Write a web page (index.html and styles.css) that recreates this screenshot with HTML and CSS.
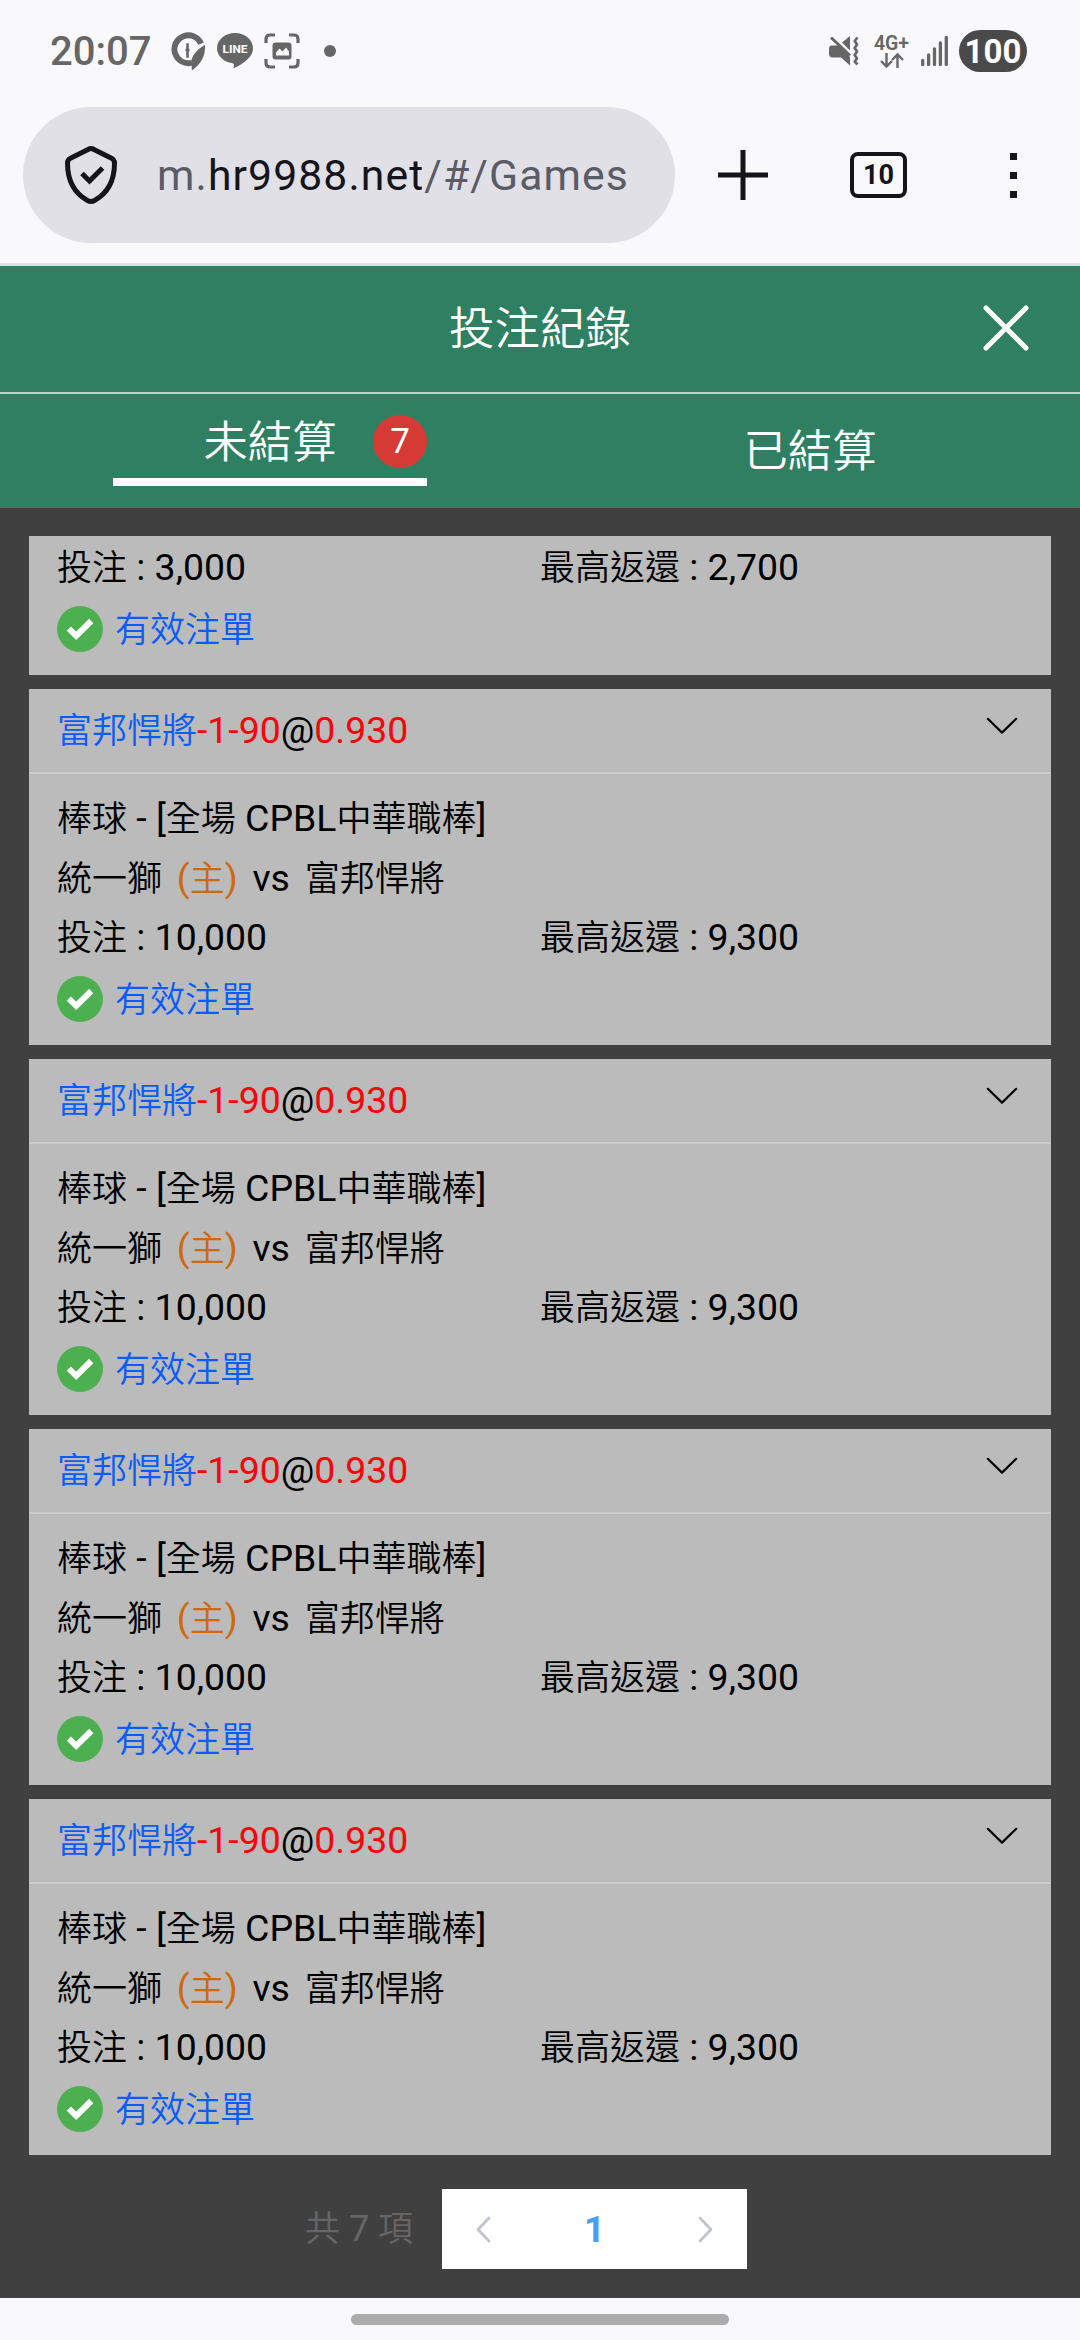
FILE: index.html
```html
<!DOCTYPE html>
<html lang="zh-Hant">
<head>
<meta charset="utf-8">
<title>投注紀錄</title>
<link rel="stylesheet" href="styles.css">
</head>
<body>
<svg class="defs" aria-hidden="true">
  <symbol id="check" viewBox="0 0 46 46">
    <circle cx="23" cy="23" r="23" fill="#4db050"/>
    <path d="M11.8 22.6 19.2 29.8 34.2 15" fill="none" stroke="#fff" stroke-width="6"/>
  </symbol>
  <symbol id="chevron" viewBox="0 0 32 18">
    <path d="M1.8 1.8 16 15.6 30.2 1.8" fill="none" stroke="#000" stroke-width="2.2" stroke-linecap="round" stroke-linejoin="round"/>
  </symbol>
</svg>

<header class="system">
  <div class="status">
    <div class="status-left">
      <span class="clock">20:07</span>
      <svg class="i-app" viewBox="0 0 36 40"><path d="M31.500 12A14.300 14.300 0 1 0 22 31.500" fill="none" stroke="#666" stroke-width="6"/><path d="M35.500 13C36 24 32 32 22 39.500L21.500 29C23 22 29 17 35.500 13Z" fill="#666"/><path d="M17.500 11.500v15M15.500 18.500h4" stroke="#666" stroke-width="2.600"/></svg>
      <svg class="i-line" viewBox="0 0 36 36"><path d="M18 0C8 0 0 6.700 0 15.300c0 7.500 6.500 13.800 15.500 15 1.300.3 1.700 1 1.400 2.300l-.5 3C24 32 36 25 36 15.300 36 6.700 28 0 18 0Z" fill="#666"/><text x="18" y="20.400" text-anchor="middle" textLength="25" lengthAdjust="spacingAndGlyphs" class="line-word">LINE</text></svg>
      <svg class="i-shot" viewBox="0 0 36 36"><path d="M2 10V6q0-4 4-4h5M25 2h5q4 0 4 4v4M34 26v4q0 4-4 4h-5M11 34H6q-4 0-4-4v-4" fill="none" stroke="#666" stroke-width="3.200"/><rect x="8.500" y="9.500" width="19" height="17" rx="3" fill="#666"/><path d="M12 22.500v-3l3.500-4 3 3 3.500-4 3 4v4Z" fill="#f9f9fb"/></svg>
      <i class="more-dot"></i>
    </div>
    <div class="status-right">
      <svg class="i-mute" viewBox="0 0 30 30"><path d="M2.500 9.500H9L21 21v8.500l-9-8H3.500q-3.500 0-3.500-4V13q0-3.500 2.500-3.500ZM21 0v14.500L13 6.500Z" fill="#666"/><path d="M2 1.500 21 19.500" stroke="#666" stroke-width="3"/><path d="M28.500 1.500 25.700 5 28 8.500 25.700 12 28 15.500 25.700 19 28 22.500 25.700 25.500 28.500 28.500" fill="none" stroke="#666" stroke-width="2.700" stroke-linejoin="round"/></svg>
      <div class="net"><span>4G+</span><svg viewBox="0 0 24 15"><path d="M6.500 0v13M1 8l5.500 5.500L12 8M17.500 15V2M12 7l5.500-5.500L23 7" fill="none" stroke="#666" stroke-width="2.400"/></svg></div>
      <svg class="i-signal" viewBox="0 0 27 30"><path d="M1.700 24.500v4M7.600 19v9.500M13.500 13v15.500M19.400 7v21.500M25.300 1.500v27" stroke="#666" stroke-width="3.300" stroke-linecap="round"/></svg>
      <span class="battery">100</span>
    </div>
  </div>
  <div class="toolbar">
    <div class="address">
      <svg class="i-shield" viewBox="0 0 52 58"><path d="M26 2.600Q27.500 2.600 29 3.500L46 12Q49.500 13.500 49.500 17C49.500 35 43 47 29.500 54.500Q26 56.300 22.500 54.500C9 47 2.500 35 2.500 17Q2.500 13.500 6 12L23 3.500Q24.500 2.600 26 2.600Z" fill="none" stroke="#15141a" stroke-width="5"/><path d="M17 27.500l7.500 7.500L37.500 22" fill="none" stroke="#15141a" stroke-width="5"/></svg>
      <span class="url">m.<b>hr9988.net</b>/#/Games</span>
    </div>
    <svg class="i-plus" viewBox="0 0 50 50"><path d="M25 0v50M0 25h50" stroke="#15141a" stroke-width="5"/></svg>
    <span class="tabcount">10</span>
    <span class="kebab"><i></i><i></i><i></i></span>
  </div>
</header>

<div class="titlebar">
  <h1>投注紀錄</h1>
  <svg class="i-close" viewBox="0 0 46 46"><path d="M3 3 43 43M43 3 3 43" stroke="#fff" stroke-width="5" stroke-linecap="round"/></svg>
</div>
<nav class="tabs">
  <div class="tab"><div class="tab-active"><span>未結算</span><span class="badge">7</span></div></div>
  <div class="tab">已結算</div>
</nav>

<main class="list">
  <article class="card card-cut">
    <div class="row amounts"><div>投注<span class="lat"> : 3,000</span></div><div>最高返還<span class="lat"> : 2,700</span></div></div>
    <div class="state"><svg><use href="#check"/></svg><span>有效注單</span></div>
  </article>
  <article class="card">
    <div class="card-head"><div class="pick">富邦悍將<span class="lat"><em>-1-90</em>@<em>0.930</em></span></div><svg class="i-chev"><use href="#chevron"/></svg></div>
    <div class="card-body">
      <div class="row">棒球<span class="lat"> - [</span>全場<span class="lat"> CPBL</span>中華職棒<span class="lat">]</span></div>
      <div class="row teams"><span>統一獅</span><span class="home"><span class="lat">(</span>主<span class="lat">)</span></span><span class="lat">vs</span><span>富邦悍將</span></div>
      <div class="row amounts"><div>投注<span class="lat"> : 10,000</span></div><div>最高返還<span class="lat"> : 9,300</span></div></div>
      <div class="state"><svg><use href="#check"/></svg><span>有效注單</span></div>
    </div>
  </article>
  <article class="card">
    <div class="card-head"><div class="pick">富邦悍將<span class="lat"><em>-1-90</em>@<em>0.930</em></span></div><svg class="i-chev"><use href="#chevron"/></svg></div>
    <div class="card-body">
      <div class="row">棒球<span class="lat"> - [</span>全場<span class="lat"> CPBL</span>中華職棒<span class="lat">]</span></div>
      <div class="row teams"><span>統一獅</span><span class="home"><span class="lat">(</span>主<span class="lat">)</span></span><span class="lat">vs</span><span>富邦悍將</span></div>
      <div class="row amounts"><div>投注<span class="lat"> : 10,000</span></div><div>最高返還<span class="lat"> : 9,300</span></div></div>
      <div class="state"><svg><use href="#check"/></svg><span>有效注單</span></div>
    </div>
  </article>
  <article class="card">
    <div class="card-head"><div class="pick">富邦悍將<span class="lat"><em>-1-90</em>@<em>0.930</em></span></div><svg class="i-chev"><use href="#chevron"/></svg></div>
    <div class="card-body">
      <div class="row">棒球<span class="lat"> - [</span>全場<span class="lat"> CPBL</span>中華職棒<span class="lat">]</span></div>
      <div class="row teams"><span>統一獅</span><span class="home"><span class="lat">(</span>主<span class="lat">)</span></span><span class="lat">vs</span><span>富邦悍將</span></div>
      <div class="row amounts"><div>投注<span class="lat"> : 10,000</span></div><div>最高返還<span class="lat"> : 9,300</span></div></div>
      <div class="state"><svg><use href="#check"/></svg><span>有效注單</span></div>
    </div>
  </article>
  <article class="card">
    <div class="card-head"><div class="pick">富邦悍將<span class="lat"><em>-1-90</em>@<em>0.930</em></span></div><svg class="i-chev"><use href="#chevron"/></svg></div>
    <div class="card-body">
      <div class="row">棒球<span class="lat"> - [</span>全場<span class="lat"> CPBL</span>中華職棒<span class="lat">]</span></div>
      <div class="row teams"><span>統一獅</span><span class="home"><span class="lat">(</span>主<span class="lat">)</span></span><span class="lat">vs</span><span>富邦悍將</span></div>
      <div class="row amounts"><div>投注<span class="lat"> : 10,000</span></div><div>最高返還<span class="lat"> : 9,300</span></div></div>
      <div class="state"><svg><use href="#check"/></svg><span>有效注單</span></div>
    </div>
  </article>
  <div class="pagination">
    <div class="total">共<span class="lat"> 7 </span>項</div>
    <div class="pager">
      <svg viewBox="0 0 15 27"><path d="M13 2 2 13.500 13 25" fill="none" stroke="#c0c4cc" stroke-width="2.800" stroke-linecap="round" stroke-linejoin="round"/></svg>
      <span>1</span>
      <svg viewBox="0 0 15 27"><path d="M2 2 13 13.500 2 25" fill="none" stroke="#c0c4cc" stroke-width="2.800" stroke-linecap="round" stroke-linejoin="round"/></svg>
    </div>
  </div>
</main>
<footer class="gesture"><i></i></footer>
</body>
</html>
```
FILE: styles.css
```css
* { box-sizing: border-box; }
body {
  margin: 0;
  width: 1080px;
  height: 2340px;
  overflow: hidden;
  display: flex;
  flex-direction: column;
  background: #f9f9fb;
  font-family: Roboto, "Noto Sans CJK TC", sans-serif;
  color: #000;
}
svg { display: block; flex: none; }
.defs { display: none; }

.system {
  flex: none;
  height: 266px;
  border-bottom: 3px solid #e0e0e4;
}
.status {
  height: 107px;
  padding: 30px 53px 0 50px;
  display: flex;
  justify-content: space-between;
  align-items: flex-start;
  color: #666;
}
.status-left, .status-right { display: flex; align-items: center; height: 42px; }
.clock { font-size: 40px; font-weight: 500; line-height: 43px; padding-top: 1px; width: 120px; }
.i-app { width: 36px; height: 39px; margin-right: 11px; }
.i-line { width: 36px; height: 36px; margin-right: 11px; }
.i-shot { width: 36px; height: 36px; margin-right: 24px; }
.line-word { font: 800 11px Roboto, sans-serif; fill: #f9f9fb; }
.more-dot { width: 12px; height: 12px; border-radius: 50%; background: #666; }
.i-mute { width: 30px; height: 30px; margin-right: 15px; }
.net { width: 35px; margin-right: 12px; display: flex; flex-direction: column; align-items: center; }
.net span { font-size: 19.500px; line-height: 18px; font-weight: 600; }
.net svg { width: 24px; height: 15px; }
.i-signal { width: 27px; height: 30px; margin-right: 11px; }
.battery {
  width: 68px;
  height: 42px;
  border-radius: 21px;
  background: #4a4a4a;
  color: #fff;
  font-size: 33px;
  font-weight: 700;
  line-height: 43px;
  text-align: center;
}

.toolbar { display: flex; align-items: center; padding: 0 63px 0 23px; height: 136px; }
.address {
  width: 652px;
  height: 136px;
  border-radius: 68px;
  background: #e0e0e6;
  display: flex;
  align-items: center;
  padding-left: 42px;
}
.i-shield { width: 52px; height: 58px; margin-right: 40px; }
.url { font-size: 42.700px; letter-spacing: 1.100px; color: #5b5b66; line-height: 50px; white-space: nowrap; }
.url b { font-weight: 400; color: #15141a; }
.i-plus { width: 50px; height: 50px; margin-left: 43px; }
.tabcount {
  width: 57px;
  height: 46px;
  margin-left: 82px;
  border: 4px solid #15141a;
  border-radius: 8px;
  font-size: 27px;
  font-weight: 700;
  line-height: 38px;
  text-align: center;
  color: #15141a;
}
.kebab { margin-left: auto; display: flex; flex-direction: column; gap: 12px; }
.kebab i { width: 7px; height: 7px; background: #15141a; }

.titlebar {
  flex: none;
  height: 128px;
  background: #2f8063;
  border-bottom: 2px solid #c8cccb;
  display: grid;
  grid-template-columns: 1fr auto 1fr;
  align-items: center;
  padding: 0 51px;
  color: #fff;
}
.titlebar h1 { grid-column: 2; margin: 0; padding-top: 1px; font-size: 45.500px; font-weight: 350; line-height: 60px; }
.i-close { width: 46px; height: 46px; justify-self: end; margin-bottom: 2px; }
.tabs {
  flex: none;
  height: 114px;
  background: #2f8063;
  color: #fff;
  display: grid;
  grid-template-columns: 1fr 1fr;
  font-size: 44.300px;
  font-weight: 350;
  line-height: 56px;
}
.tab { display: flex; justify-content: center; align-items: center; padding-top: 1px; }
.tab-active {
  width: 314px;
  height: 71px;
  margin-top: -2px;
  border-bottom: 8px solid #fff;
  display: grid;
  grid-template-columns: 1fr auto 1fr;
  align-items: start;
}
.tab-active > span:first-child { grid-column: 2; }
.badge {
  justify-self: end;
  width: 54px;
  height: 53px;
  border-radius: 50%;
  background: #d63a35;
  font-size: 35px;
  font-weight: 400;
  line-height: 54px;
  text-align: center;
}

.list {
  flex: 1;
  background: #404040;
  padding: 28px 29px 0;
  display: flex;
  flex-direction: column;
  gap: 14px;
  font-size: 35px;
  font-weight: 350;
}
.lat { font-size: 37.400px; font-weight: 400; white-space: pre; }
.card { flex: none; height: 356px; background: #bbb; }
.card-cut { height: 139px; padding: 2px 28px 0; }
.card-head {
  height: 85px;
  border-bottom: 2px solid #cbcbcb;
  padding: 0 28px;
  display: flex;
  justify-content: space-between;
  align-items: center;
}
.pick { color: #0a5cfa; line-height: 82px; }
.pick .lat { color: #000; }
.pick em { font-style: normal; color: #f80508; }
.i-chev { width: 32px; height: 18px; margin: -10px 5px 0 0; }
.card-body { padding: 15px 28px 0; }
.row { height: 59.500px; line-height: 59.500px; white-space: nowrap; }
.amounts { display: grid; grid-template-columns: 1fr 1fr; }
.teams { display: flex; gap: 14.800px; align-items: baseline; }
.home { color: #cc6a10; }
.state { height: 63px; display: flex; align-items: center; gap: 12px; color: #0a5cfa; line-height: 50px; }
.state span { padding-top: 3px; }
.state svg { width: 46px; height: 46px; }

.pagination { display: flex; align-items: center; margin: 20px 0 0 276px; height: 80px; }
.total { width: 137px; padding-top: 1px; color: #666; white-space: nowrap; line-height: 50px; }
.total .lat { font-size: 36px; }
.pager {
  width: 305px;
  height: 80px;
  background: #fff;
  display: flex;
  align-items: center;
  justify-content: space-between;
  padding: 0 34px;
}
.pager svg { width: 15px; height: 27px; }
.pager span { font-size: 36.500px; font-weight: 700; color: #4a9df5; line-height: 50px; padding-top: 1px; }

.gesture { flex: none; height: 42px; background: #f9f9fb; padding-top: 16px; }
.gesture i { display: block; width: 378px; height: 11px; border-radius: 6px; background: #acacac; margin: 0 auto; }
```
